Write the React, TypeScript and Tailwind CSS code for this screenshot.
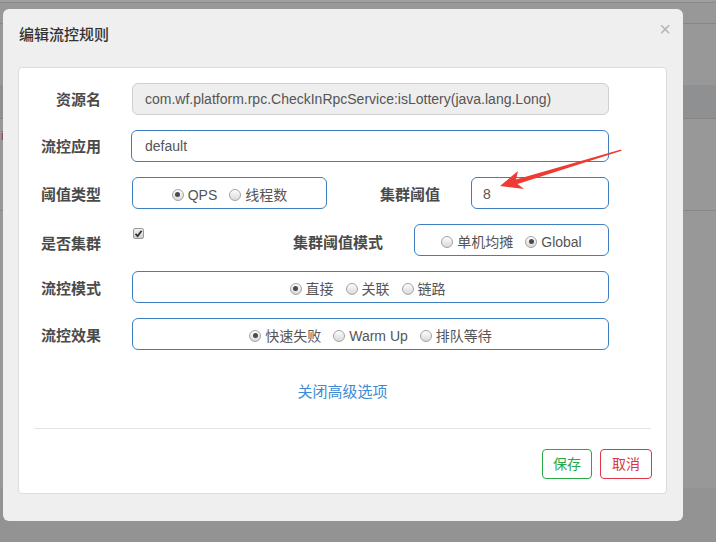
import React from 'react';

type RadioProps = {
    label: string;
    checked?: boolean;
};

const Radio: React.FC<RadioProps> = ({ label, checked }) => {
    return (
        <span className="flex items-center gap-[4px]">
            <span className="w-[12px] h-[12px] rounded-full border border-[#a3a3a3] bg-gradient-to-b from-[#fdfdfd] to-[#d9d9d9] flex items-center justify-center">
                {checked && <span className="w-[5px] h-[5px] rounded-full bg-[#4a4a4a]" />}
            </span>
            <span className="mt-[2px]">{label}</span>
        </span>
    );
};

const Label: React.FC<{ text: string; className?: string }> = ({ text, className }) => (
    <div className={'text-right font-semibold text-[15px] text-[#4a4a4a] ' + (className || '')}>{text}</div>
);

const App: React.FC = () => {
    const boxCls = 'h-[32px] border border-[#3d7fc1] rounded-[6px] bg-white flex items-center pt-[3px]';

    return (
        <div
            className="relative w-[716px] h-[542px] overflow-hidden bg-[#989898] flex flex-col"
            style={{ fontFamily: '"Liberation Sans", "Noto Sans CJK SC", sans-serif' }}
        >
            {/* page behind the overlay */}
            <div className="h-[2px] bg-[#9e9e9e]" />
            <div className="h-px bg-[#8a8a8a]" />
            <div className="h-[20px]" />
            <div className="h-px bg-[#878787]" />
            <div className="h-[61px]" />
            <div className="h-[33px] bg-[#8f9091]" />
            <div className="h-px bg-[#858585]" />
            <div className="h-[91px] pl-[1px] pt-[8px] text-[12px] text-[#a33a2a]">i</div>
            <div className="h-px bg-[#888]" />
            <div className="h-[277px]" />
            <div className="flex-1 bg-[#939393]" />

            {/* dialog */}
            <div className="absolute left-[3px] top-[9px] w-[680px] h-[512px] bg-[#efefef] rounded-[6px] flex flex-col">
                <div className="flex items-start justify-between pl-[16px] pr-[12px] pt-[16px] h-[58px]">
                    <div className="text-[15px] font-medium text-[#333] leading-[20px]">编辑流控规则</div>
                    <div className="text-[20px] leading-[16px] text-[#b5b5b5] -mt-[4px]">×</div>
                </div>

                <div className="ml-[15px] w-[649px] h-[427px] bg-white border border-[#dcdcdc] rounded-[4px] flex flex-col pt-[15px]">
                    <div className="flex flex-col gap-[15px] pr-[57px] text-[14px] text-[#555]">
                        <div className="flex items-center h-[32px]">
                            <Label text="资源名" className="w-[82px] mt-[2px]" />
                            <div className="ml-[31px] w-[477px] h-[32px] border border-[#cfcfcf] rounded-[6px] bg-[#eeeeee] flex items-center pl-[12px]">
                                com.wf.platform.rpc.CheckInRpcService:isLottery(java.lang.Long)
                            </div>
                        </div>

                        <div className="flex items-center h-[32px]">
                            <Label text="流控应用" className="w-[82px] mt-[3px]" />
                            <div className={boxCls + ' ml-[30px] w-[478px] pl-[13px] !pt-0'}>default</div>
                        </div>

                        <div className="flex items-center h-[32px]">
                            <Label text="阈值类型" className="w-[82px] mt-[5px]" />
                            <div className={boxCls + ' ml-[31px] w-[195px] justify-center gap-[12px]'}>
                                <Radio label="QPS" checked />
                                <Radio label="线程数" />
                            </div>
                            <Label text="集群阈值" className="flex-1 pr-[31px] mt-[5px]" />
                            <div className={boxCls + ' w-[138px] pl-[11px]'}>8</div>
                        </div>

                        <div className="flex items-center h-[32px]">
                            <Label text="是否集群" className="w-[82px] mt-[8px]" />
                            <div className="ml-[32px] self-start mt-[4px] w-[11px] h-[11px] border border-[#9a9a9a] rounded-[2px] bg-gradient-to-b from-[#f2f2f2] to-[#cfcfcf] flex items-center justify-center">
                                <svg width="9" height="9" viewBox="0 0 9 9">
                                    <path d="M1.5 4.8 L3.6 7 L7.6 1.8" stroke="#333" strokeWidth="1.8" fill="none" />
                                </svg>
                            </div>
                            <Label text="集群阈值模式" className="flex-1 pr-[31px] mt-[7px]" />
                            <div className={boxCls + ' w-[195px] justify-center gap-[12px]'}>
                                <Radio label="单机均摊" />
                                <Radio label="Global" checked />
                            </div>
                        </div>

                        <div className="flex items-center h-[32px]">
                            <Label text="流控模式" className="w-[82px] mt-[5px]" />
                            <div className={boxCls + ' ml-[31px] w-[477px] justify-center gap-[12px] pr-[6px]'}>
                                <Radio label="直接" checked />
                                <Radio label="关联" />
                                <Radio label="链路" />
                            </div>
                        </div>

                        <div className="flex items-center h-[32px]">
                            <Label text="流控效果" className="w-[82px] mt-[5px]" />
                            <div className={boxCls + ' ml-[31px] w-[477px] justify-center gap-[12px]'}>
                                <Radio label="快速失败" checked />
                                <Radio label="Warm Up" />
                                <Radio label="排队等待" />
                            </div>
                        </div>
                    </div>

                    <div className="mt-[32px] text-center text-[15px] text-[#3e8ad3] leading-[20px]">关闭高级选项</div>

                    <div className="mx-[15px] mt-[26px] h-px bg-[#e3e3e3]" />

                    <div className="flex justify-end gap-[8px] mt-[20px] pr-[14px]">
                        <button className="h-[30px] px-[10px] border border-[#28a745] rounded-[4px] text-[14px] text-[#28a745] bg-white">
                            保存
                        </button>
                        <button className="h-[30px] px-[11px] border border-[#dc3545] rounded-[4px] text-[14px] text-[#dc3545] bg-white">
                            取消
                        </button>
                    </div>
                </div>
            </div>

            {/* annotation arrow */}
            <svg className="absolute left-0 top-0 pointer-events-none" width="716" height="542">
                <polygon
                    points="500,186 518,171 516,179.5 621,149.6 621.6,150.8 517.5,184 524,189"
                    fill="#ee3b33"
                />
            </svg>
        </div>
    );
};

export default App;
